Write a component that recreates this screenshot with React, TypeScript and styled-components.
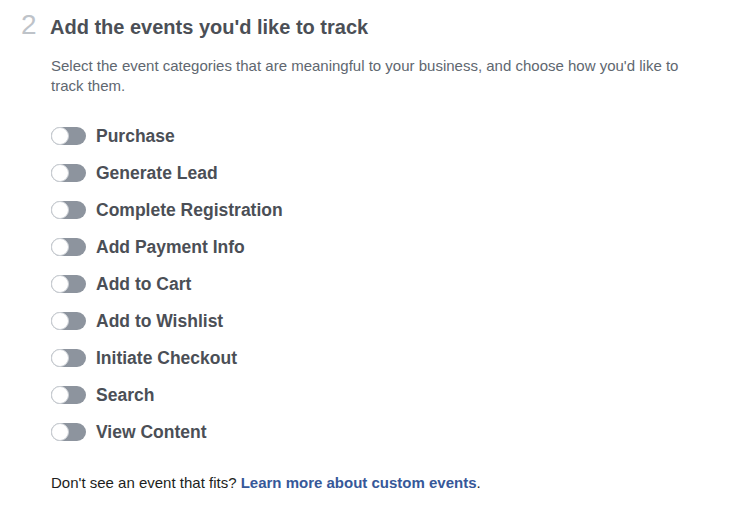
import React from 'react';
import styled, { createGlobalStyle } from 'styled-components';

const GlobalStyle = createGlobalStyle`
  html, body {
    margin: 0;
    padding: 0;
    background: #ffffff;
    font-family: "Liberation Sans", Arial, sans-serif;
  }
`;

const Page = styled.div`
  width: 736px;
  height: 515px;
  box-sizing: border-box;
  padding: 10px 0 0 21px;
  background: #fff;
`;

const Header = styled.div`
  display: flex;
  align-items: baseline;
  gap: 9px;
`;

const StepNumber = styled.span`
  font-size: 28px;
  color: #bec3c9;
  width: 20px;
  line-height: 30px;
`;

const Title = styled.h2`
  margin: 0;
  font-size: 20px;
  font-weight: bold;
  color: #4b4f56;
  line-height: 30px;
`;

const Body = styled.div`
  padding-left: 30px;
`;

const Description = styled.p`
  margin: 14px 0 0;
  width: 650px;
  font-size: 15px;
  line-height: 20px;
  color: #606770;
`;

const EventList = styled.ul`
  list-style: none;
  margin: 28px 0 0;
  padding: 0;
  display: flex;
  flex-direction: column;
  gap: 13px;
`;

const EventRow = styled.li`
  display: flex;
  align-items: center;
  gap: 10px;
  height: 24px;
`;

const Toggle = styled.span<{ $on?: boolean }>`
  position: relative;
  width: 35px;
  height: 18px;
  border-radius: 9px;
  background: ${(p) => (p.$on ? '#4267b2' : '#8d949e')};
  flex-shrink: 0;
`;

const Knob = styled.span<{ $on?: boolean }>`
  position: absolute;
  top: 0;
  left: ${(p) => (p.$on ? '17px' : '0')};
  width: 18px;
  height: 18px;
  box-sizing: border-box;
  border-radius: 50%;
  background: #fff;
  border: 1px solid #ccd0d5;
`;

const EventLabel = styled.span`
  font-size: 17.5px;
  font-weight: bold;
  color: #4b4f56;
`;

const Footer = styled.p`
  margin: 30px 0 0;
  font-size: 15px;
  color: #1c1e21;
`;

const Link = styled.a`
  color: #365899;
  font-weight: bold;
  text-decoration: none;
`;

const events = [
  'Purchase',
  'Generate Lead',
  'Complete Registration',
  'Add Payment Info',
  'Add to Cart',
  'Add to Wishlist',
  'Initiate Checkout',
  'Search',
  'View Content',
];

export default function App() {
  return (
    <>
      <GlobalStyle />
      <Page>
        <Header>
          <StepNumber>2</StepNumber>
          <Title>Add the events you'd like to track</Title>
        </Header>
        <Body>
          <Description>
            Select the event categories that are meaningful to your business, and choose how you'd like to
            track them.
          </Description>
          <EventList>
            {events.map((name) => (
              <EventRow key={name}>
                <Toggle>
                  <Knob />
                </Toggle>
                <EventLabel>{name}</EventLabel>
              </EventRow>
            ))}
          </EventList>
          <Footer>
            Don't see an event that fits? <Link href="#">Learn more about custom events</Link>.
          </Footer>
        </Body>
      </Page>
    </>
  );
}
